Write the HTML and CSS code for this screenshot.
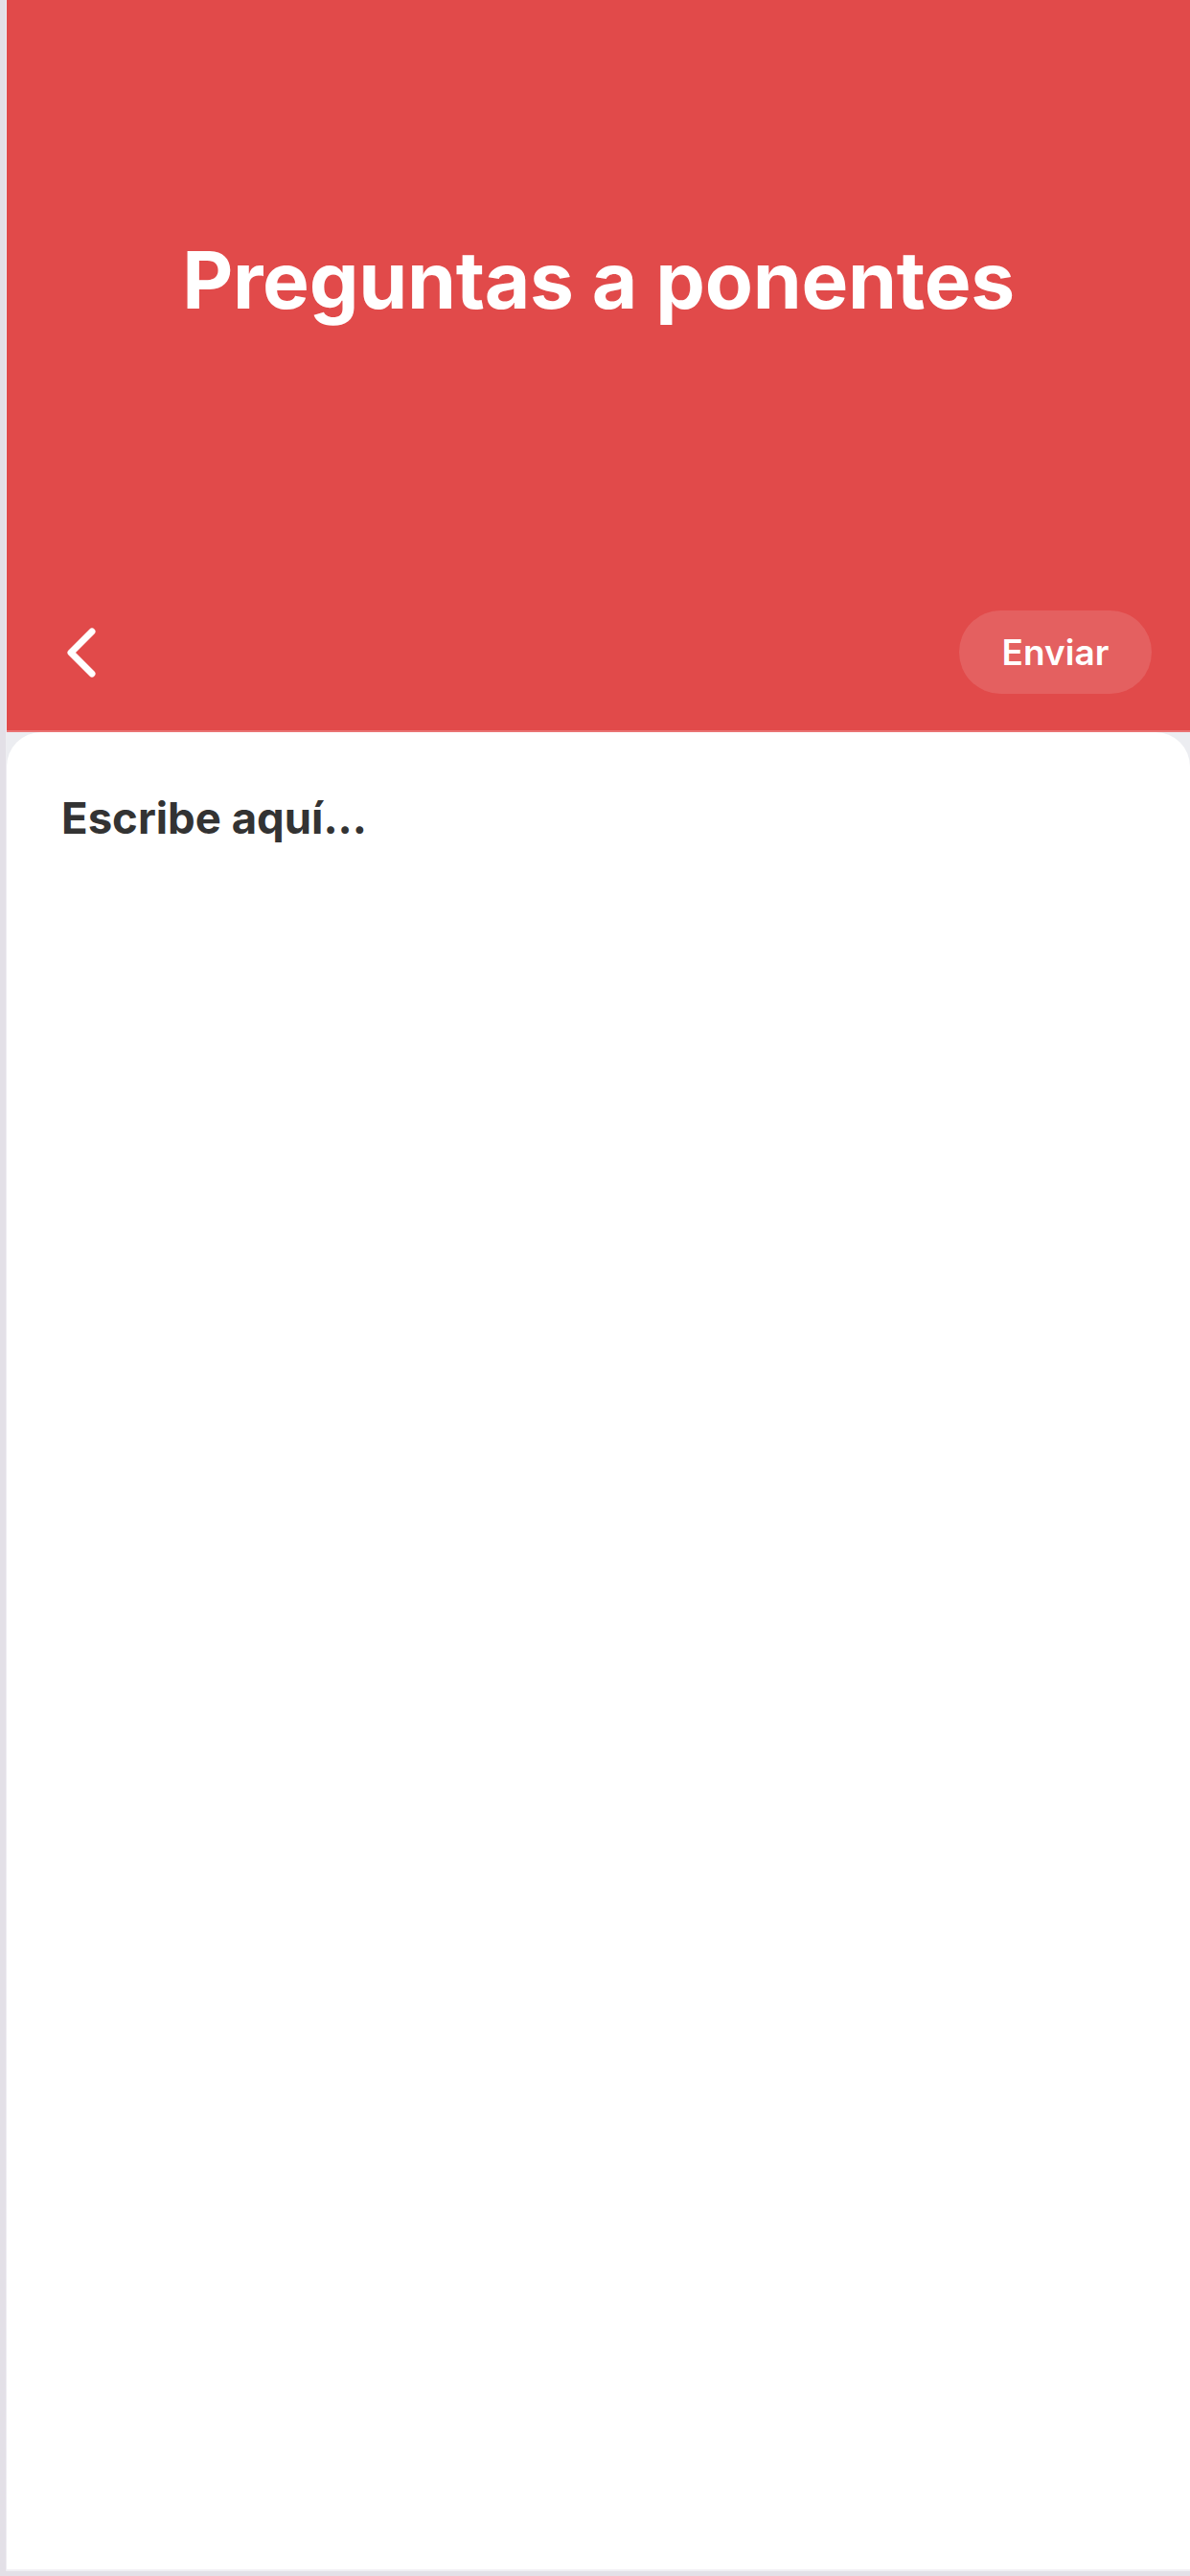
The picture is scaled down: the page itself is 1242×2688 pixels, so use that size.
FILE: index.html
```html
<!DOCTYPE html>
<html lang="es">
<head>
<meta charset="utf-8">
<title>Preguntas a ponentes</title>
<link rel="stylesheet" href="styles.css">
</head>
<body>
<div class="frame">
  <header class="header">
    <h1 class="title">Preguntas a ponentes</h1>
    <nav class="nav">
      <button class="back" aria-label="Volver">
        <svg width="34" height="54" viewBox="0 0 34 54">
          <path d="M28 5 L6 27 L28 49" fill="none" stroke="#fff" stroke-width="7" stroke-linecap="round" stroke-linejoin="round"/>
        </svg>
      </button>
      <button class="send">Enviar</button>
    </nav>
  </header>
  <main class="body">
    <section class="card">
      <div class="placeholder">Escribe aquí...</div>
    </section>
  </main>
</div>
</body>
</html>
```
FILE: styles.css
```css
html, body {
  margin: 0;
  padding: 0;
}
body {
  background: #e3e0e7;
  width: 1242px;
  height: 2688px;
  overflow: hidden;
  font-family: Inter, "Noto Sans", sans-serif;
}
.frame {
  margin-left: 6px;
  height: 2683px;
  display: flex;
  flex-direction: column;
  background: #ecedf1;
  border-left: 1px solid #eeedf2;
  box-sizing: border-box;
}
.header {
  height: 764px;
  flex: none;
  background: #e14a4a;
  border-bottom: 2px solid #ea7373;
  box-sizing: border-box;
  display: flex;
  flex-direction: column;
  justify-content: space-between;
}
.title {
  margin: 0;
  padding-top: 248px;
  text-align: center;
  color: #fff;
  font-family: Inter, sans-serif;
  font-weight: 700;
  font-size: 82px;
  line-height: 90px;
  letter-spacing: -0.3px;
}
.nav {
  display: flex;
  align-items: center;
  justify-content: space-between;
  padding: 0 40px 38px 61px;
}
.back {
  background: none;
  border: 0;
  padding: 0;
  width: 34px;
  height: 54px;
  display: flex;
}
.send {
  width: 201px;
  height: 87px;
  border: 0;
  border-radius: 44px;
  background: rgba(255, 255, 255, 0.12);
  color: #fff;
  font-family: Inter, sans-serif;
  font-weight: 600;
  font-size: 37px;
  padding: 0;
}
.body {
  flex: 1;
  display: flex;
  flex-direction: column;
}
.card {
  flex: 1;
  background: #fff;
  border-radius: 36px 36px 0 0;
  padding: 62px 57px;
  border-bottom: 2px solid #f1f0f4;
}
.placeholder {
  color: #333333;
  font-weight: 700;
  font-size: 45.5px;
  line-height: 56px;
}
```
